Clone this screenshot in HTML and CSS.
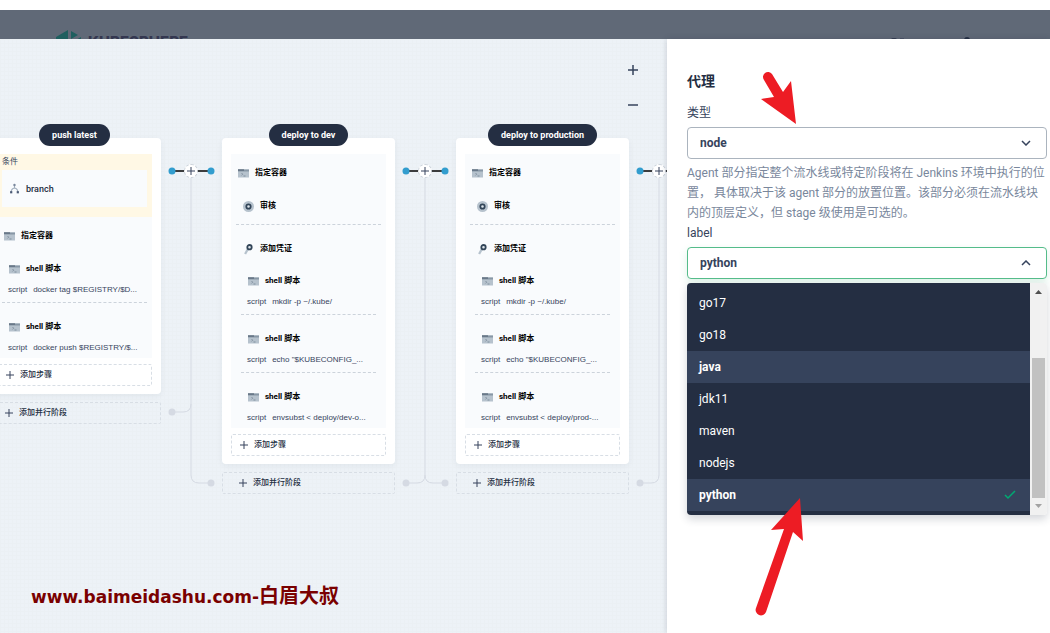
FILE: index.html
```
<!DOCTYPE html>
<html lang="zh-CN">

<head>
    <meta charset="UTF-8">
    <meta name="viewport" content="width=device-width, initial-scale=1.0">
    <title>KubeSphere</title>
    <link rel="stylesheet" href="styles.css">
</head>

<body>
    <!-- shared icons -->
    <svg class="sprite" aria-hidden="true">
        <symbol id="icon-terminal" viewBox="0 0 11 10">
            <rect x="0" y="1" width="11" height="8" fill="#b6c2cd"/>
            <rect x="0" y="1" width="11" height="2" fill="#8897a6"/>
            <rect x="0" y="1" width="6" height="1" fill="#4a5b6d"/>
            <path d="M3.500 4.500l1.200 1.200-1.200 1.200M5.500 7.500h2" fill="none" stroke="#5f7082" stroke-width=".6"/>
        </symbol>
        <symbol id="icon-record" viewBox="0 0 10 10">
            <circle cx="5" cy="5" r="5" fill="#b6c2cd"/>
            <circle cx="5" cy="5" r="2" fill="#dfe6ec" stroke="#324558" stroke-width="1.6"/>
        </symbol>
        <symbol id="icon-key" viewBox="0 0 10 11">
            <path d="M4.6 4.6L1.6 10" stroke="#b6c2cd" stroke-width="2.2"/>
            <circle cx="6" cy="3.2" r="2.2" fill="#dfe6ec" stroke="#324558" stroke-width="1.8"/>
        </symbol>
        <symbol id="icon-branch" viewBox="0 0 10 10">
            <path d="M5 2v3M5 4.5C3 5 2 6 2 8M5 4.5C7 5 8 6 8 8" fill="none" stroke="#a3b0be" stroke-width="1"/>
            <circle cx="5" cy="1.8" r="1.1" fill="#79879c"/>
            <rect x="1" y="7.4" width="2" height="2" fill="#4a5974"/>
            <rect x="7" y="7.4" width="2" height="2" fill="#4a5974"/>
        </symbol>
        <symbol id="icon-plus" viewBox="0 0 8 8">
            <path d="M4 0v8M0 4h8" stroke="#36435c" stroke-width="1"/>
        </symbol>
    </svg>

    <header>
        <svg class="logo" width="26" height="26" viewBox="0 0 26 26">
            <path d="M0 7L12 0v26L0 19z" fill="#1f5f5f"/>
            <path d="M15 1l7 4-7 4z" fill="#1f5f5f"/>
            <path d="M15 13l10-6v12l-10 6z" fill="#1f5f5f"/>
        </svg>
        <span class="brand">KUBESPHERE</span>
        <svg class="user" width="90" height="8" viewBox="0 0 90 8">
            <rect x="0" y="1" width="6" height="7" rx="2" fill="#333c50"/>
            <rect x="9" y="1" width="4" height="7" fill="#4a5366"/>
            <circle cx="76" cy="3" r="3" fill="#242e42"/>
        </svg>
    </header>

    <main>
        <section class="canvas">
            <div class="pipeline">
                <div class="stage">
                    <h3>push latest</h3>
                    <div class="card">
                        <div class="steps">
                            <div class="condition">
                                <p>条件</p>
                                <div class="branch"><svg><use href="#icon-branch"/></svg>branch</div>
                            </div>
                            <div class="step-head agent"><svg><use href="#icon-terminal"/></svg>指定容器</div>
                            <div class="nested">
                                <div class="step">
                                    <div class="step-head"><svg><use href="#icon-terminal"/></svg>shell 脚本</div>
                                    <p class="arg"><span>script</span>docker tag $REGISTRY/$D...</p>
                                </div>
                                <div class="step">
                                    <div class="step-head"><svg><use href="#icon-terminal"/></svg>shell 脚本</div>
                                    <p class="arg"><span>script</span>docker push $REGISTRY/$...</p>
                                </div>
                            </div>
                        </div>
                        <button class="add"><svg><use href="#icon-plus"/></svg>添加步骤</button>
                    </div>
                    <button class="add parallel"><svg><use href="#icon-plus"/></svg>添加并行阶段</button>
                </div>

                <div class="connector">
                    <svg width="61" height="375" viewBox="0 0 61 375">
                        <path class="lane" d="M30 54V351Q30 359 38 359H50M11 288H22Q30 288 30 280"/>
                        <circle class="end" cx="11" cy="288" r="3.500"/>
                        <circle class="end" cx="50" cy="359" r="3.500"/>
                        <path class="link" d="M11 47H50"/>
                        <circle class="dot" cx="11" cy="47" r="3.500"/>
                        <circle class="dot" cx="50" cy="47" r="3.500"/>
                    </svg>
                    <button aria-label="添加阶段"><svg><use href="#icon-plus"/></svg></button>
                </div>

                <div class="stage">
                    <h3>deploy to dev</h3>
                    <div class="card">
                        <div class="steps">
                            <div class="step-head agent"><svg><use href="#icon-terminal"/></svg>指定容器</div>
                            <div class="nested">
                                <div class="step review">
                                    <div class="step-head"><svg><use href="#icon-record"/></svg>审核</div>
                                </div>
                                <div class="step">
                                    <div class="step-head"><svg><use href="#icon-key"/></svg>添加凭证</div>
                                    <div class="nested">
                                        <div class="step">
                                            <div class="step-head"><svg><use href="#icon-terminal"/></svg>shell 脚本</div>
                                            <p class="arg"><span>script</span>mkdir -p ~/.kube/</p>
                                        </div>
                                        <div class="step">
                                            <div class="step-head"><svg><use href="#icon-terminal"/></svg>shell 脚本</div>
                                            <p class="arg"><span>script</span>echo "$KUBECONFIG_...</p>
                                        </div>
                                        <div class="step">
                                            <div class="step-head"><svg><use href="#icon-terminal"/></svg>shell 脚本</div>
                                            <p class="arg"><span>script</span>envsubst &lt; deploy/dev-o...</p>
                                        </div>
                                    </div>
                                </div>
                            </div>
                        </div>
                        <button class="add"><svg><use href="#icon-plus"/></svg>添加步骤</button>
                    </div>
                    <button class="add parallel"><svg><use href="#icon-plus"/></svg>添加并行阶段</button>
                </div>

                <div class="connector">
                    <svg width="61" height="375" viewBox="0 0 61 375">
                        <path class="lane" d="M30 54V351Q30 359 38 359H50M11 359H22Q30 359 30 351"/>
                        <circle class="end" cx="11" cy="359" r="3.500"/>
                        <circle class="end" cx="50" cy="359" r="3.500"/>
                        <path class="link" d="M11 47H50"/>
                        <circle class="dot" cx="11" cy="47" r="3.500"/>
                        <circle class="dot" cx="50" cy="47" r="3.500"/>
                    </svg>
                    <button aria-label="添加阶段"><svg><use href="#icon-plus"/></svg></button>
                </div>

                <div class="stage">
                    <h3>deploy to production</h3>
                    <div class="card">
                        <div class="steps">
                            <div class="step-head agent"><svg><use href="#icon-terminal"/></svg>指定容器</div>
                            <div class="nested">
                                <div class="step review">
                                    <div class="step-head"><svg><use href="#icon-record"/></svg>审核</div>
                                </div>
                                <div class="step">
                                    <div class="step-head"><svg><use href="#icon-key"/></svg>添加凭证</div>
                                    <div class="nested">
                                        <div class="step">
                                            <div class="step-head"><svg><use href="#icon-terminal"/></svg>shell 脚本</div>
                                            <p class="arg"><span>script</span>mkdir -p ~/.kube/</p>
                                        </div>
                                        <div class="step">
                                            <div class="step-head"><svg><use href="#icon-terminal"/></svg>shell 脚本</div>
                                            <p class="arg"><span>script</span>echo "$KUBECONFIG_...</p>
                                        </div>
                                        <div class="step">
                                            <div class="step-head"><svg><use href="#icon-terminal"/></svg>shell 脚本</div>
                                            <p class="arg"><span>script</span>envsubst &lt; deploy/prod-...</p>
                                        </div>
                                    </div>
                                </div>
                            </div>
                        </div>
                        <button class="add"><svg><use href="#icon-plus"/></svg>添加步骤</button>
                    </div>
                    <button class="add parallel"><svg><use href="#icon-plus"/></svg>添加并行阶段</button>
                </div>

                <div class="connector">
                    <svg width="61" height="375" viewBox="0 0 61 375">
                        <path class="lane" d="M11 359H22Q30 359 30 351V54"/>
                        <circle class="end" cx="11" cy="359" r="3.500"/>
                        <path class="link" d="M11 47H50"/>
                        <circle class="dot" cx="11" cy="47" r="3.500"/>
                    </svg>
                    <button aria-label="添加阶段"><svg><use href="#icon-plus"/></svg></button>
                </div>
            </div>

            <div class="zoom">
                <button aria-label="放大"><svg width="12" height="12"><path d="M6 1v10M1 6h10"/></svg></button>
                <button aria-label="缩小"><svg width="12" height="12"><path d="M1 6h10"/></svg></button>
            </div>

            <p class="watermark">www.baimeidashu.com-<span>白眉大叔</span></p>
        </section>

        <aside class="panel">
            <h2>代理</h2>
            <label for="agent-type">类型</label>
            <div class="select">
                <select id="agent-type">
                    <option>node</option>
                </select>
                <svg width="10" height="6"><path d="M1 1l4 4 4-4"/></svg>
            </div>
            <p class="desc">Agent 部分指定整个流水线或特定阶段将在 Jenkins 环境中执行的位置， 具体取决于该 agent 部分的放置位置。该部分必须在流水线块内的顶层定义，但 stage 级使用是可选的。</p>
            <label for="agent-label">label</label>
            <div class="select open">
                <select id="agent-label">
                    <option>python</option>
                </select>
                <svg width="10" height="6"><path d="M1 5l4-4 4 4"/></svg>
                <div class="menu">
                    <ul>
                        <li>go17</li>
                        <li>go18</li>
                        <li class="active">java</li>
                        <li>jdk11</li>
                        <li>maven</li>
                        <li>nodejs</li>
                        <li class="active">python<svg width="12" height="10"><path d="M1 5l3 3 7-7"/></svg></li>
                    </ul>
                    <div class="scrollbar">
                        <svg width="7" height="4"><path d="M0 4l3.500-4L7 4z" fill="#505050"/></svg>
                        <div class="thumb"></div>
                        <svg width="7" height="4"><path d="M0 0l3.500 4L7 0z" fill="#a3a3a3"/></svg>
                    </div>
                </div>
            </div>

            <!-- red pointers -->
            <svg class="arrows" width="383" height="590" viewBox="0 0 383 590">
                <path d="M129 85L94 60l13-2L97 41a5 5 0 0 1 8-6l11 18 8-11z"/>
                <path d="M133 459L104 491l13-1L89 569a5 5 0 0 0 10 4l27-80 10 9z"/>
            </svg>
        </aside>
    </main>
</body>

</html>
```
FILE: styles.css
```
* {
    box-sizing: border-box;
}

body {
    margin: 0;
    padding-top: 10px;
    min-height: 100vh;
    display: flex;
    flex-direction: column;
    font-family: Roboto, "Noto Sans CJK SC", sans-serif;
    font-size: 12px;
    line-height: 20px;
    color: #242e42;
    background-color: #fff;
}

h2, h3, p, ul {
    margin: 0;
    padding: 0;
}

button {
    font-family: inherit;
    color: inherit;
    padding: 0;
    cursor: pointer;
}

.sprite {
    display: none;
}

header {
    height: 29px;
    padding: 20px 56px 0;
    display: flex;
    align-items: flex-start;
    overflow: hidden;
    background-color: #606977;
}

.logo {
    flex: none;
}

.brand {
    margin: 2px auto 0 6px;
    font-family: Inter, sans-serif;
    font-size: 15px;
    font-weight: 800;
    color: #343750;
}

.user {
    margin: 7px 13px 0 0;
}

main {
    flex: 1;
    display: flex;
}

.canvas {
    position: relative;
    flex: 1;
    min-width: 0;
    overflow: hidden;
    padding-top: 85px;
    background-color: #edf2f7;
    background-image: linear-gradient(#ebf0f4 1px, transparent 1px), linear-gradient(90deg, #ebf0f4 1px, transparent 1px);
    background-size: 4px 4px;
}

.pipeline {
    display: flex;
    align-items: flex-start;
    margin-left: -12px;
}

.stage {
    flex: none;
    width: 173px;
    display: flex;
    flex-direction: column;
}

.stage h3 {
    position: relative;
    align-self: center;
    height: 22px;
    padding: 0 13px;
    margin-bottom: -8px;
    border-radius: 11px;
    font-size: 9px;
    line-height: 22px;
    color: #fff;
    background-color: #242e42;
}

.card {
    padding: 16px 9px 8px;
    border-radius: 4px;
    background-color: #fff;
    box-shadow: 0 2px 6px rgba(36, 46, 66, 0.06);
}

.steps {
    margin-bottom: 6px;
    padding-bottom: 2px;
    background-color: #f9fbfd;
}

.steps .nested {
    padding: 0 5px;
}

.step-head, .branch {
    display: flex;
    align-items: center;
    gap: 6px;
    padding-left: 7px;
    font-size: 8px;
    font-weight: 700;
    line-height: 16px;
    color: #000;
}

.step-head svg, .branch svg {
    width: 11px;
    height: 11px;
}

.agent {
    padding-top: 11px;
}

.step {
    padding-top: 16px;
}

.agent + .nested > .step:first-child {
    padding-top: 17px;
}

.step:not(:last-child) {
    padding-bottom: 4px;
    border-bottom: 1px dashed #ccd3db;
}

.step.review:first-child {
    padding-bottom: 10px;
}

.arg {
    margin-top: 5px;
    padding-left: 6px;
    font-family: "Liberation Sans", sans-serif;
    font-size: 8px;
    line-height: 16px;
    white-space: nowrap;
    color: #36435c;
}

.arg span {
    margin-right: 6px;
}

.condition {
    height: 63px;
    padding: 0 5px;
    background-color: #fff8e5;
}

.condition p {
    font-size: 8px;
    line-height: 16px;
    color: #36435c;
}

.branch {
    height: 37px;
    font-size: 9px;
    font-weight: 500;
    color: #242e42;
    background-color: #f9fbfd;
}

.add {
    width: 100%;
    height: 22px;
    display: flex;
    align-items: center;
    gap: 6px;
    padding-left: 8px;
    border: 1px dashed #d8dee5;
    border-radius: 2px;
    font-size: 8px;
    font-weight: 500;
    line-height: 16px;
    background: none;
}

.add svg, .connector button svg {
    width: 8px;
    height: 8px;
}

.parallel {
    margin-top: 8px;
    padding-left: 16px;
}

.connector {
    position: relative;
    flex: none;
    width: 61px;
}

.connector > svg {
    display: block;
}

.lane {
    fill: none;
    stroke: #d5dae3;
    stroke-width: 1;
}

.end {
    fill: #d5dae3;
}

.link {
    stroke: #000;
    stroke-width: 1.500;
}

.dot {
    fill: #329dce;
}

.connector button {
    position: absolute;
    top: 40px;
    left: 23px;
    width: 14px;
    height: 14px;
    display: flex;
    align-items: center;
    justify-content: center;
    border: 1px dashed #ccd3db;
    border-radius: 7px;
    background-color: #fff;
}

.zoom {
    position: absolute;
    top: 21px;
    right: 24px;
    display: flex;
    flex-direction: column;
    gap: 15px;
}

.zoom button {
    width: 20px;
    height: 20px;
    border: none;
    background: none;
}

.zoom svg {
    display: block;
    margin: auto;
    fill: none;
    stroke: #36435c;
    stroke-width: 1.500;
}

.watermark {
    position: absolute;
    left: 31px;
    bottom: 26px;
    font-family: "DejaVu Sans", "Noto Sans CJK SC", sans-serif;
    font-size: 17px;
    font-weight: 700;
    white-space: nowrap;
    color: #7a0000;
}

.watermark span {
    font-size: 20px;
}

.panel {
    position: relative;
    flex: none;
    width: 383px;
    padding: 32px 3px 0 20px;
    background-color: #fff;
    box-shadow: 0 0 6px rgba(36, 46, 66, 0.2);
}

.panel h2 {
    margin-bottom: 12px;
    font-size: 14px;
    line-height: 20px;
}

.panel label {
    display: block;
    margin-bottom: 4px;
    color: #36435c;
}

.desc {
    margin-top: 4px;
    color: #79879c;
}

.select {
    position: relative;
}

.select select {
    display: block;
    width: 100%;
    height: 32px;
    padding: 0 12px;
    appearance: none;
    border: 1px solid #abb4be;
    border-radius: 4px;
    font-family: inherit;
    font-size: 12px;
    font-weight: 700;
    color: #36435c;
    background-color: #fff;
}

.select.open select {
    border-color: #55bc8a;
    box-shadow: 0 4px 8px rgba(85, 188, 138, 0.2);
}

.select > svg {
    position: absolute;
    top: 13px;
    right: 16px;
    fill: none;
    stroke: #36435c;
    stroke-width: 1.500;
}

.menu {
    position: absolute;
    top: 36px;
    left: 0;
    right: 0;
    display: flex;
    border-radius: 4px;
    overflow: hidden;
    box-shadow: 0 4px 8px rgba(36, 46, 66, 0.2);
}

.menu ul {
    flex: 1;
    padding: 4px 0;
    list-style: none;
    background-color: #242e42;
}

.menu li {
    display: flex;
    align-items: center;
    justify-content: space-between;
    height: 32px;
    padding: 0 14px 0 12px;
    color: #fff;
}

.menu li.active {
    font-weight: 700;
    background-color: #36435c;
}

.menu li svg {
    fill: none;
    stroke: #00aa72;
    stroke-width: 1.500;
}

.scrollbar {
    width: 17px;
    padding: 7px 0;
    display: flex;
    flex-direction: column;
    align-items: center;
    background-color: #f1f1f1;
}

.thumb {
    width: 13px;
    height: 140px;
    margin: auto 0 6px;
    background-color: #c1c1c1;
}

.arrows {
    position: absolute;
    top: 0;
    left: 0;
    fill: #ed1c24;
    pointer-events: none;
}
```
